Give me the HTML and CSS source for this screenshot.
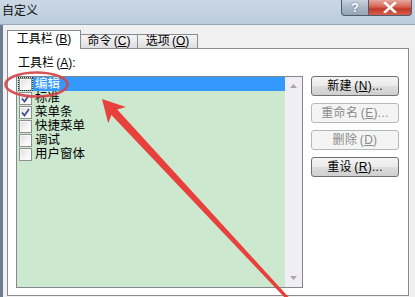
FILE: index.html
```html
<!DOCTYPE html>
<html lang="zh-CN">
<head>
<meta charset="utf-8">
<title>自定义</title>
<link rel="stylesheet" href="styles.css">
</head>
<body>
<div class="window">
  <div class="titlebar">
    <span class="title">自定义</span>
    <div class="caption-btns">
      <div class="cap-btn help">?</div>
      <div class="cap-btn close">
        <svg width="14" height="11" viewBox="0 0 14 11"><path d="M2 1 L12 10 M12 1 L2 10" stroke="#fff" stroke-width="2.6" stroke-linecap="square"/></svg>
      </div>
    </div>
  </div>
  <div class="body">
    <div class="tabs">
      <div class="tab active">工具栏 (<u>B</u>)</div>
      <div class="tab">命令 (<u>C</u>)</div>
      <div class="tab">选项 (<u>O</u>)</div>
    </div>
    <div class="pane">
      <div class="label">工具栏 (<u>A</u>):</div>
      <div class="main">
        <div class="listbox">
          <div class="list">
            <div class="row selected">
              <span class="cbwrap focus"><span class="cb"></span></span>
              <span class="txt">编辑</span>
            </div>
            <div class="row">
              <span class="cbwrap"><span class="cb"><svg width="11" height="11" viewBox="0 0 11 11"><path d="M2 5.5 L4.5 8.5 L9 2" fill="none" stroke="#3c4f8c" stroke-width="1.7"/></svg></span></span>
              <span class="txt">标准</span>
            </div>
            <div class="row">
              <span class="cbwrap"><span class="cb"><svg width="11" height="11" viewBox="0 0 11 11"><path d="M2 5.5 L4.5 8.5 L9 2" fill="none" stroke="#3c4f8c" stroke-width="1.7"/></svg></span></span>
              <span class="txt">菜单条</span>
            </div>
            <div class="row">
              <span class="cbwrap"><span class="cb"></span></span>
              <span class="txt">快捷菜单</span>
            </div>
            <div class="row">
              <span class="cbwrap"><span class="cb"></span></span>
              <span class="txt">调试</span>
            </div>
            <div class="row">
              <span class="cbwrap"><span class="cb"></span></span>
              <span class="txt">用户窗体</span>
            </div>
          </div>
          <div class="scrollbar">
            <svg class="arrow" width="7" height="4" viewBox="0 0 7 4"><path d="M0 4 L3.5 0 L7 4 Z" fill="#a6a6a6"/></svg>
            <svg class="arrow" width="7" height="4" viewBox="0 0 7 4"><path d="M0 0 L3.5 4 L7 0 Z" fill="#a6a6a6"/></svg>
          </div>
        </div>
        <div class="buttons">
          <div class="btn">新建 (<u>N</u>)...</div>
          <div class="btn disabled">重命名 (<u>E</u>)...</div>
          <div class="btn disabled">删除 (<u>D</u>)</div>
          <div class="btn">重设 (<u>R</u>)...</div>
        </div>
      </div>
    </div>
  </div>
  <svg class="annot" width="415" height="297" viewBox="0 0 415 297">
    <ellipse cx="36.5" cy="84.5" rx="31" ry="12" fill="none" stroke="#d4474b" stroke-width="2.6" opacity="0.92"/>
    <polygon points="102,99 125.8,106.9 117.2,109.5 289,297.5 286.5,299.5 111.4,114.9 108.2,123.3" fill="#e8403b"/>
  </svg>
</div>
</body>
</html>
```

FILE: styles.css
```css
html, body {
  margin: 0;
  padding: 0;
}
body {
  width: 415px;
  height: 297px;
  overflow: hidden;
  background: #f0f0f0;
  font-family: "Liberation Sans", "Noto Sans CJK SC", sans-serif;
  font-size: 12px;
  color: #000;
}
u {
  text-decoration: underline;
}
.window {
  position: relative;
  width: 415px;
  height: 297px;
  display: flex;
  flex-direction: column;
}
.titlebar {
  height: 24px;
  flex: none;
  display: flex;
  align-items: flex-start;
  background: linear-gradient(180deg, #cad8e6 0%, #c2d1e0 60%, #bccbdb 100%);
  border-bottom: 1px solid #98a7b8;
}
.title {
  padding: 3px 0 0 2px;
  line-height: 16px;
  font-size: 12px;
  color: #111;
}
.caption-btns {
  margin-left: auto;
  margin-right: 3px;
  display: flex;
}
.cap-btn {
  height: 15px;
  display: flex;
  align-items: center;
  justify-content: center;
  border: 1px solid #4f5b6b;
  border-top: none;
}
.help {
  width: 26px;
  border-radius: 0 0 0 4px;
  background: linear-gradient(180deg, #c8d2dd 0%, #a9b7c6 50%, #95a5b7 100%);
  color: #fff;
  font-weight: bold;
  font-size: 13px;
  line-height: 15px;
  text-shadow: 0 0 2px #56657a;
  font-family: "Liberation Sans", sans-serif;
}
.close {
  width: 42px;
  border-left: none;
  border-radius: 0 0 4px 0;
  background: linear-gradient(180deg, #e5a99f 0%, #d56452 45%, #c0392b 60%, #d6604f 100%);
}
.body {
  flex: 1;
  display: flex;
  flex-direction: column;
  border-left: 3px solid #6d7c8e;
}
.tabs {
  height: 23px;
  flex: none;
  display: flex;
  align-items: flex-end;
  margin-left: 4px;
  position: relative;
  z-index: 1;
}
.tab {
  height: 13px;
  padding: 0;
  line-height: 13px;
  text-align: center;
  border: 1px solid #898c95;
  border-bottom: none;
  border-left: none;
  background: linear-gradient(180deg, #f3f3f3 0%, #ebebeb 50%, #dedede 100%);
  color: #000;
  word-spacing: -1px;
}
.tab:nth-child(2) {
  width: 56px;
}
.tab:nth-child(3) {
  width: 59px;
}
.tab.active {
  width: 72px;
  height: 17px;
  line-height: 17px;
  border-left: 1px solid #898c95;
  background: #fff;
  margin-bottom: -1px;
  padding-bottom: 1px;
}
.pane {
  flex: none;
  margin: 0 6px 0 4px;
  border: 1px solid #898c95;
  background: #fff;
  padding: 7px 9px 0 8px;
  box-sizing: border-box;
  height: 248px;
}
.label {
  line-height: 14px;
  height: 14px;
  margin-bottom: 6px;
  padding-left: 2px;
  word-spacing: -1px;
}
.main {
  display: flex;
  gap: 8px;
}
.listbox {
  width: 287px;
  height: 212px;
  box-sizing: border-box;
  border: 1px solid #828790;
  display: flex;
}
.list {
  flex: 1;
  background: #cce8cf;
  display: flex;
  flex-direction: column;
}
.row {
  height: 14px;
  display: flex;
  align-items: center;
}
.cbwrap {
  width: 15px;
  height: 14px;
  margin-left: 1px;
  box-sizing: border-box;
  display: flex;
  align-items: center;
  justify-content: center;
}
.cbwrap.focus {
  outline: 1px dotted #333;
  outline-offset: -1px;
}
.cb {
  width: 13px;
  height: 13px;
  box-sizing: border-box;
  border: 1px solid #8e8f8f;
  background: linear-gradient(135deg, #dcdcdc 0%, #f6f6f6 60%, #ffffff 100%);
  box-shadow: inset 0 0 0 1px #f8f8f8;
  display: flex;
  align-items: center;
  justify-content: center;
}
.txt {
  padding-left: 2px;
  line-height: 14px;
  height: 14px;
  font-size: 12.5px;
}
.row.selected .txt {
  flex: 1;
  background: #3399ff;
  color: #fff;
}
.scrollbar {
  width: 17px;
  background: #f0eef4;
  display: flex;
  flex-direction: column;
  align-items: center;
  justify-content: space-between;
  padding: 7px 0 7px;
  box-sizing: border-box;
}
.buttons {
  width: 88px;
  display: flex;
  flex-direction: column;
  gap: 7px;
}
.btn {
  height: 20px;
  box-sizing: border-box;
  border: 1px solid #707070;
  border-radius: 3px;
  background: linear-gradient(180deg, #f4f4f4 0%, #ebebeb 48%, #dddddd 52%, #cfcfcf 100%);
  text-align: center;
  line-height: 18px;
  font-size: 12px;
  color: #000;
  letter-spacing: 0.3px;
  word-spacing: -1px;
}
.btn.disabled {
  border-color: #b5b8bb;
  background: #f4f4f4;
  color: #8a8a8a;
}
.annot {
  position: absolute;
  left: 0;
  top: 0;
  pointer-events: none;
  z-index: 5;
}
```
